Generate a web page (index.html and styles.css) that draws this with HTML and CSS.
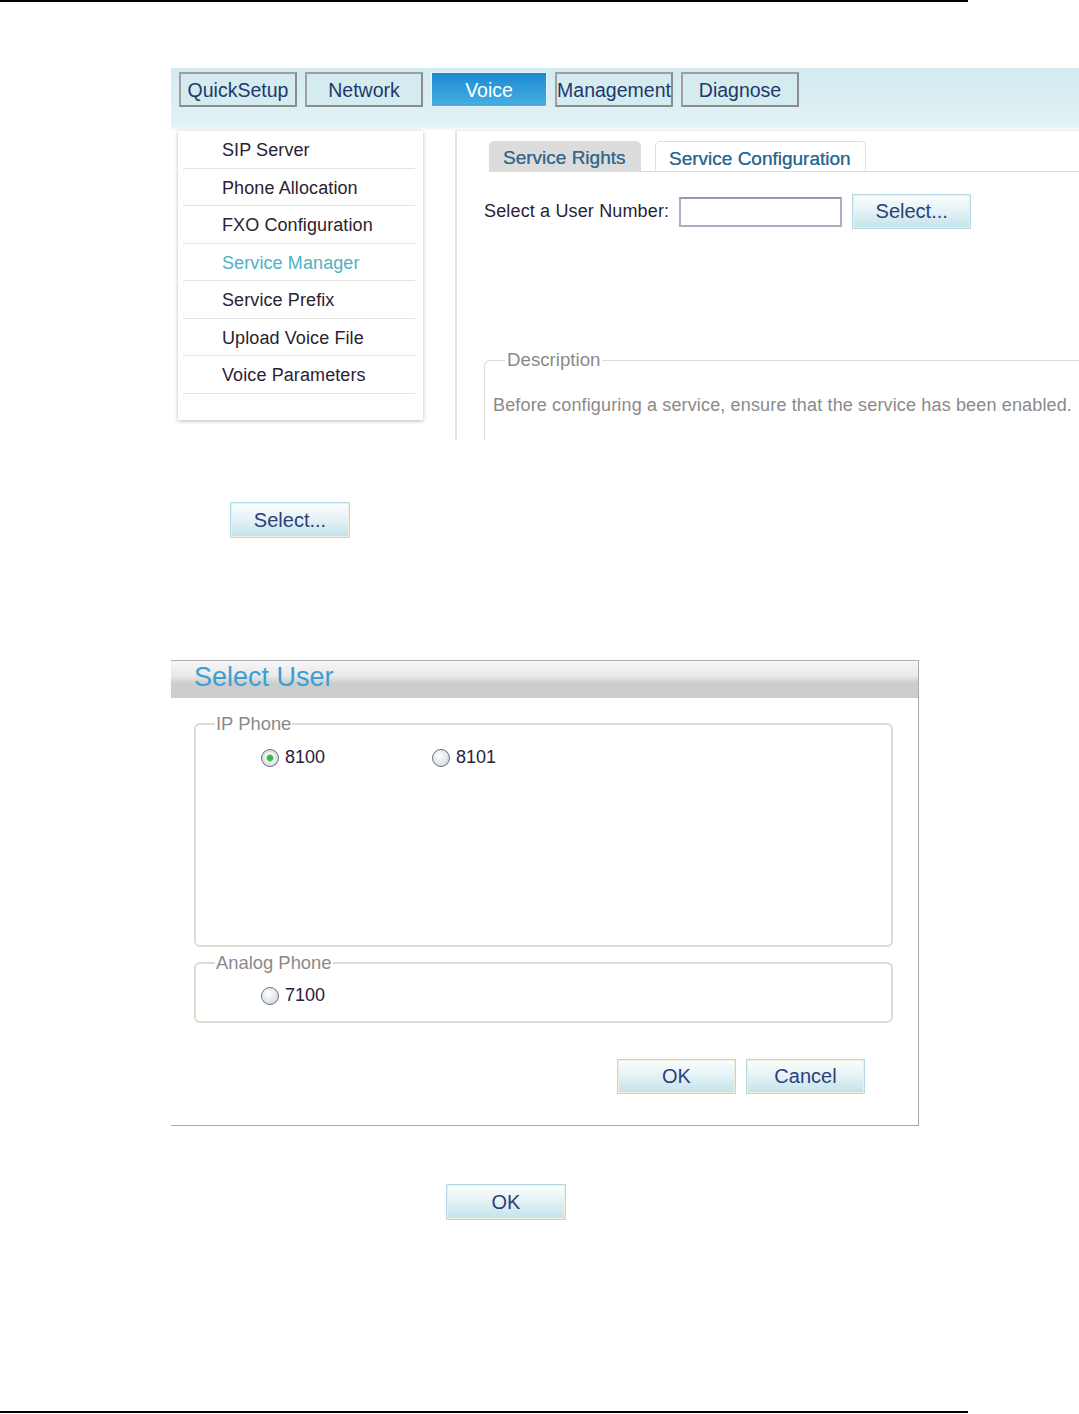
FILE: index.html
```html
<!DOCTYPE html>
<html lang="en">
<head>
    <meta charset="UTF-8">
    <title>Service Manager - Select User</title>
    <link rel="stylesheet" href="styles.css">
</head>
<body>

    <div class="rule"></div>

    <!-- Screenshot 1: web management page -->
    <div class="shot">
        <div class="navbar">
            <button class="nav-btn">QuickSetup</button>
            <button class="nav-btn">Network</button>
            <button class="nav-btn active">Voice</button>
            <button class="nav-btn">Management</button>
            <button class="nav-btn">Diagnose</button>
        </div>
        <div class="strip"></div>
        <div class="main">
            <ul class="menu">
                <li>SIP Server</li>
                <li>Phone Allocation</li>
                <li>FXO Configuration</li>
                <li class="current">Service Manager</li>
                <li>Service Prefix</li>
                <li>Upload Voice File</li>
                <li>Voice Parameters</li>
            </ul>
            <div class="panel">
                <div class="tabs">
                    <span class="tab">Service Rights</span>
                    <span class="tab active">Service Configuration</span>
                </div>
                <div class="user-row">
                    <label class="user-label">Select a User Number:</label>
                    <input class="text-input" type="text">
                    <button class="btn">Select...</button>
                </div>
                <fieldset class="desc">
                    <legend>Description</legend>
                    <p>Before configuring a service, ensure that the service has been enabled.</p>
                </fieldset>
            </div>
        </div>
    </div>

    <div class="single select-single">
        <button class="btn">Select...</button>
    </div>

    <!-- Screenshot 2: Select User dialog -->
    <div class="dialog">
        <div class="dialog-title">Select User</div>
        <div class="dialog-body">
            <fieldset class="group ip-group">
                <legend>IP Phone</legend>
                <div class="radios">
                    <label class="radio"><input type="radio" name="user" checked>8100</label>
                    <label class="radio"><input type="radio" name="user">8101</label>
                </div>
            </fieldset>
            <fieldset class="group analog-group">
                <legend>Analog Phone</legend>
                <div class="radios">
                    <label class="radio"><input type="radio" name="user">7100</label>
                </div>
            </fieldset>
            <div class="dialog-buttons">
                <button class="btn">OK</button>
                <button class="btn">Cancel</button>
            </div>
        </div>
    </div>

    <div class="single ok-single">
        <button class="btn">OK</button>
    </div>

    <div class="rule bottom"></div>

</body>
</html>
```

FILE: styles.css
```css
body {
    font-family: "Liberation Sans", Arial, sans-serif;
    margin: 0;
    height: 1414px;
    display: flex;
    flex-direction: column;
    background-color: white;
    overflow: hidden;
}
.rule {
    width: 968px;
    height: 2px;
    background-color: black;
    flex-shrink: 0;
}
.rule.bottom {
    margin-top: auto;
    margin-bottom: 1px;
}

/* shared button look */
.btn {
    width: 120px;
    height: 36px;
    padding: 0;
    font-family: "Liberation Sans", Arial, sans-serif;
    font-size: 20px;
    color: #2b3f78;
    background: linear-gradient(#fbfdfd, #e6f3f6 45%, #c2e2ea);
    border: 1px solid #b3dae4;
    box-shadow: inset 0 0 0 1px #f1efdc;
    cursor: pointer;
}

/* screenshot 1 */
.shot {
    margin: 66px 0 0 171px;
    height: 372px;
    overflow: hidden;
    flex-shrink: 0;
}
.navbar {
    height: 59px;
    box-sizing: border-box;
    padding: 4px 0 0 8px;
    display: flex;
    align-items: flex-start;
    gap: 8px;
    background: linear-gradient(#d2ebf0, #e2f2f5);
}
.nav-btn {
    width: 118px;
    height: 35px;
    padding: 2px 0 0;
    font-family: "Liberation Sans", Arial, sans-serif;
    font-size: 19.5px;
    color: #22386a;
    background-color: #d4ecef;
    border: 2px solid #8c8c8c;
    border-top-color: #a0a0a0;
    border-left-color: #a0a0a0;
}
.nav-btn.active {
    width: 116px;
    color: white;
    background: linear-gradient(#1a8ad2, #47afe1);
    border: 1px solid #e9f6f9;
    outline: 1px solid #d8eef2;
}
.strip {
    height: 3px;
    background: linear-gradient(#e9f5f7, #f8fbfc);
}
.main {
    display: flex;
    align-items: flex-start;
}
.menu {
    list-style: none;
    margin: 1px 0 0 7px;
    padding: 0 8px 0 5px;
    width: 245px;
    height: 289px;
    box-sizing: border-box;
    background-color: white;
    box-shadow: 0 1px 4px rgba(0, 0, 0, 0.28);
}
.menu li {
    height: 37.5px;
    box-sizing: border-box;
    padding: 9px 0 0 39px;
    border-bottom: 1px solid #e4e4e4;
    font-size: 18px;
    letter-spacing: 0.1px;
    color: #2a2233;
}
.menu li.current {
    color: #4eb2c3;
}
.panel {
    flex: 1;
    margin-left: 32px;
    height: 310px;
    border-left: 2px solid #e4e4e4;
    border-top: 1px solid #ececec;
}
.tabs {
    display: flex;
    align-items: flex-end;
    gap: 14px;
    margin: 10px 0 0 32px;
    border-bottom: 1px solid #dddddd;
}
.tab {
    height: 30px;
    box-sizing: border-box;
    padding: 5px 0 0;
    font-size: 19px;
    line-height: 24px;
    color: #356a8b;
    text-shadow: 0 0 0.4px #356a8b;
}
.tabs .tab:first-child {
    width: 152px;
    padding-left: 14px;
    background-color: #dcdcdc;
    border-radius: 5px 5px 0 0;
}
.tab.active {
    width: 211px;
    padding-left: 13px;
    color: #2a6b92;
    background-color: white;
    border: 1px solid #dedede;
    border-bottom: none;
    border-radius: 5px 5px 0 0;
}
.user-row {
    display: flex;
    align-items: center;
    margin: 22px 0 0 27px;
}
.user-label {
    font-size: 18px;
    color: #2a2233;
    letter-spacing: 0.15px;
}
.text-input {
    width: 163px;
    height: 30px;
    box-sizing: border-box;
    margin-left: 10px;
    border: 2px solid #a6b1c1;
    border-top-color: #8e9bb0;
    background-color: white;
}
.user-row .btn {
    margin-left: 10px;
    width: 119px;
    height: 35px;
}
.desc {
    margin: 120px 0 0 27px;
    padding: 24px 0 80px 8px;
    border: 1px solid #dcdcd2;
    border-right: none;
    border-radius: 6px 0 0 0;
}
.desc legend {
    margin-left: 12px;
    padding: 0 2px;
    font-size: 18.7px;
    line-height: 22px;
    color: #8a8a8a;
}
.desc p {
    margin: 0;
    font-size: 18px;
    color: #8a8a8a;
    white-space: nowrap;
    letter-spacing: 0.15px;
}

/* standalone buttons */
.single {
    flex-shrink: 0;
}
.select-single {
    margin: 62px 0 0 230px;
}
.ok-single {
    margin: 58px 0 0 446px;
}

/* screenshot 2: dialog */
.dialog {
    flex-shrink: 0;
    margin: 122px 0 0 171px;
    width: 748px;
    box-sizing: border-box;
    border-top: 1px solid #b0b0b0;
    border-right: 1px solid #a8a8a8;
    border-bottom: 1px solid #a8a8a8;
}
.dialog-title {
    height: 37px;
    box-sizing: border-box;
    padding: 1px 0 0 23px;
    font-size: 27px;
    color: #3b9fd3;
    background: linear-gradient(#f6f6f6, #e9e9e9 40%, #cdcdcd 60%, #cbcbcb);
}
.dialog-body {
    padding: 15px 25px 31px 23px;
}
.group {
    margin: 0;
    padding: 0;
    border: 2px solid #dcdcd0;
    border-radius: 6px;
}
.group legend {
    margin-left: 19px;
    padding: 0 1px;
    font-size: 18.4px;
    line-height: 22px;
    color: #8a8a8a;
}
.ip-group {
    height: 234px;
    box-sizing: border-box;
}
.analog-group {
    margin-top: 5px;
    height: 71px;
    box-sizing: border-box;
}
.radios {
    display: grid;
    grid-template-columns: 171px 171px;
    padding: 12px 0 0 65px;
}
.analog-group .radios {
    padding-top: 11px;
}
.radio {
    display: flex;
    align-items: center;
    gap: 6px;
    font-size: 18px;
    color: #2a2040;
}
.radio input {
    appearance: none;
    margin: 0;
    width: 18px;
    height: 18px;
    border: 1.5px solid #5a7593;
    border-radius: 50%;
    background: radial-gradient(circle at 40% 35%, #ffffff, #e6e6e6 55%, #c4c4c4);
}
.radio input:checked {
    background: radial-gradient(circle, #2fae3f 0, #47c24f 3px, #ffffff 4px, #e6e6e6 6px, #c8c8c8);
}
.dialog-buttons {
    display: flex;
    justify-content: flex-end;
    gap: 10px;
    margin: 36px 28px 0 0;
}
.dialog-buttons .btn {
    width: 119px;
    height: 35px;
}
```
